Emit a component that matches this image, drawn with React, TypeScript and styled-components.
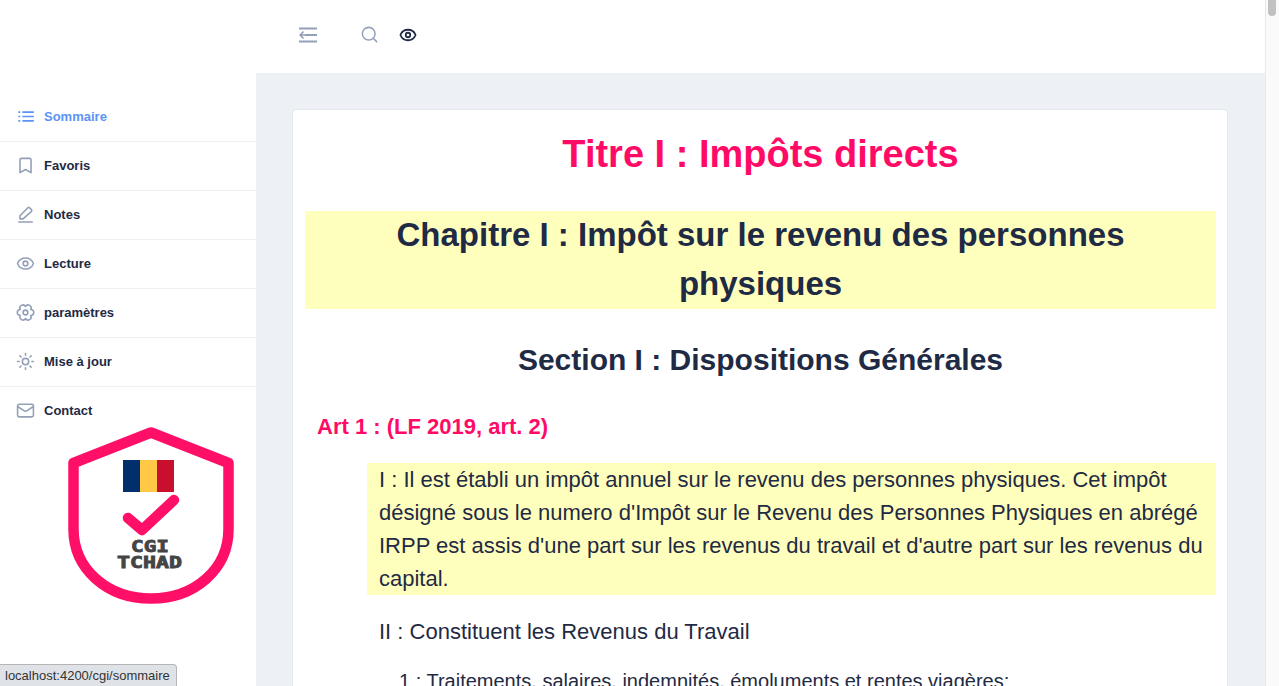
import React from 'react';
import styled, { createGlobalStyle } from 'styled-components';
import { Bookmark, Eye, Mail, Search, Sun } from 'lucide-react';

const GlobalStyle = createGlobalStyle`
  html, body {
    margin: 0;
    height: 100%;
    overflow: hidden;
    background: #fff;
    font-family: "Liberation Sans", Arial, sans-serif;
    color: #1f2a44;
  }
`;

type IconProps = { size?: number; strokeWidth?: number; color?: string };

const ListIcon = ({ size, strokeWidth, color }: IconProps) => (
  <svg width={size} height={size} viewBox="0 0 24 24" fill="none" stroke={color} strokeWidth={strokeWidth}>
    <path d="M8 6.5h14.5M8 12h14.5M8 17.5h14.5" />
    <path d="M3 6.5h2.4M3 12h2.4M3 17.5h2.4" />
  </svg>
);

const NoteIcon = ({ size, strokeWidth, color }: IconProps) => (
  <svg width={size} height={size} viewBox="0 0 24 24" fill="none" stroke={color} strokeWidth={strokeWidth} strokeLinejoin="round" strokeLinecap="round">
    <path d="M3.5 21.5h17" />
    <path d="M5 17.5v-4L15 3.5a1.5 1.5 0 0 1 2.1 0l2.4 2.4a1.5 1.5 0 0 1 0 2.1L9 17.5Z" />
  </svg>
);

const GearIcon = ({ size, strokeWidth, color }: IconProps) => (
  <svg width={size} height={size} viewBox="0 0 24 24" fill="none" stroke={color} strokeWidth={strokeWidth} strokeLinejoin="round">
    <path d="M12 4.4A3.8 3.8 0 0 1 18.6 8.2A3.8 3.8 0 0 1 18.6 15.8A3.8 3.8 0 0 1 12 19.6A3.8 3.8 0 0 1 5.4 15.8A3.8 3.8 0 0 1 5.4 8.2A3.8 3.8 0 0 1 12 4.4Z" />
    <circle cx="12" cy="12" r="3" />
  </svg>
);

const menu = [
  { label: 'Sommaire', icon: ListIcon, active: true },
  { label: 'Favoris', icon: Bookmark },
  { label: 'Notes', icon: NoteIcon },
  { label: 'Lecture', icon: Eye },
  { label: 'paramètres', icon: GearIcon },
  { label: 'Mise à jour', icon: Sun },
  { label: 'Contact', icon: Mail },
];

const BackIcon = () => (
  <svg width="18" height="16" viewBox="0 0 18 16" fill="none" stroke="#94a0b8" strokeWidth="2">
    <path d="M0 1.5h18M6 8h12M0 14.5h18" />
    <path d="M4.5 4.5 1.2 8l3.3 3.5M1.5 8H7" strokeWidth="1.7" />
  </svg>
);

const ShieldLogo = () => (
  <svg width="168" height="184" viewBox="0 0 168 184">
    <path
      d="M84 8.5 L161.5 39 V105 C161.5 145 128 174.5 84 174.5 C40 174.5 6.5 145 6.5 105 V39 Z"
      fill="#fff"
      stroke="#ff0f68"
      strokeWidth="10.5"
      strokeLinejoin="round"
    />
    <rect x="56" y="36" width="17" height="32" fill="#002f6c" />
    <rect x="73" y="36" width="17" height="32" fill="#ffc845" />
    <rect x="90" y="36" width="17" height="32" fill="#c8102e" />
    <path
      d="M61 94 L75 106 L107 76"
      fill="none"
      stroke="#ff0f68"
      strokeWidth="10.5"
      strokeLinecap="round"
      strokeLinejoin="round"
    />
    <LogoText x="64" y="128" textLength="38" lengthAdjust="spacingAndGlyphs">CGI</LogoText>
    <LogoText x="50" y="144" textLength="65" lengthAdjust="spacingAndGlyphs">TCHAD</LogoText>
  </svg>
);

export default function App() {
  return (
    <Page>
      <GlobalStyle />
      <Content>
        <Sidebar>
          <Brand />
          <Menu>
            {menu.map(({ label, icon: Icon, active }) => (
              <MenuItem key={label} $active={active}>
                <Icon size={19} strokeWidth={2} color={active ? '#5b93f7' : '#94a0b8'} />
                <span>{label}</span>
              </MenuItem>
            ))}
          </Menu>
          <LogoWrap>
            <ShieldLogo />
          </LogoWrap>
        </Sidebar>
        <Main>
          <Header>
            <BackIcon />
            <SearchWrap>
              <Search size={19} strokeWidth={1.9} color="#94a0b8" />
            </SearchWrap>
            <Eye size={18} strokeWidth={2.4} color="#1f2a44" />
          </Header>
          <Body>
            <Card>
              <Title>Titre I : Impôts directs</Title>
              <Chapter>Chapitre I : Impôt sur le revenu des personnes physiques</Chapter>
              <Section>Section I : Dispositions Générales</Section>
              <Article>Art 1 : (LF 2019, art. 2)</Article>
              <Highlight>
                I : Il est établi un impôt annuel sur le revenu des personnes physiques. Cet impôt
                désigné sous le numero d'Impôt sur le Revenu des Personnes Physiques en abrégé IRPP
                est assis d'une part sur les revenus du travail et d'autre part sur les revenus du
                capital.
              </Highlight>
              <Para>II : Constituent les Revenus du Travail</Para>
              <SubPara>1 : Traitements, salaires, indemnités, émoluments et rentes viagères;</SubPara>
            </Card>
          </Body>
        </Main>
      </Content>
      <Scrollbar>
        <Thumb />
      </Scrollbar>
      <StatusTip>localhost:4200/cgi/sommaire</StatusTip>
    </Page>
  );
}

const LogoText = styled.text`
  font-family: "DejaVu Sans Mono", monospace;
  font-weight: 700;
  font-size: 16px;
  fill: #444;
  stroke: #444;
  stroke-width: 0.8px;
`;

const Page = styled.div`
  display: flex;
  width: 1279px;
  height: 686px;
  overflow: hidden;
`;

const Content = styled.div`
  flex: 1;
  display: flex;
  min-width: 0;
`;

const Sidebar = styled.aside`
  width: 256px;
  flex: none;
  background: #fff;
`;

const Brand = styled.div`
  height: 93px;
`;

const Menu = styled.nav`
  display: flex;
  flex-direction: column;
`;

const MenuItem = styled.a<{ $active?: boolean }>`
  height: 48px;
  box-sizing: content-box;
  display: flex;
  align-items: center;
  gap: 9px;
  padding: 0 0 0 16px;
  border-bottom: 1px solid #edf0f5;
  font-size: 13px;
  font-weight: 700;
  color: ${({ $active }) => ($active ? '#5b93f7' : '#1f2a44')};

  & > span,
  & > svg {
    margin-top: -1px;
  }

  &:last-child {
    border-bottom: none;
  }
`;

const LogoWrap = styled.div`
  display: flex;
  margin: -11px 0 0 67px;
`;

const Main = styled.div`
  flex: 1;
  min-width: 0;
  display: flex;
  flex-direction: column;
`;

const Header = styled.header`
  height: 73px;
  flex: none;
  display: flex;
  align-items: center;
  padding: 0 0 4px 43px;
  box-sizing: border-box;
  background: #fff;
`;

const SearchWrap = styled.div`
  display: flex;
  margin: 0 20px 0 43px;
`;

const Body = styled.main`
  flex: 1;
  min-height: 0;
  overflow: hidden;
  background: #edf0f5;
  padding: 36px 37px 0 36px;
`;

const Card = styled.article`
  background: #fff;
  border: 1px solid #e2e7f0;
  border-radius: 4px 4px 0 0;
  padding: 0 11px 40px 12px;
  min-height: 700px;
`;

const Title = styled.h1`
  margin: 0;
  padding-top: 20px;
  font-size: 38px;
  line-height: 49px;
  font-weight: 700;
  text-align: center;
  color: #ff0a66;
`;

const Chapter = styled.h2`
  margin: 32px 0 0;
  padding: 0 60px 1px;
  font-size: 33px;
  line-height: 48.5px;
  font-weight: 700;
  text-align: center;
  background: #ffffbd;
`;

const Section = styled.h3`
  margin: 26px 0 0;
  font-size: 30px;
  line-height: 50px;
  font-weight: 700;
  text-align: center;
`;

const Article = styled.h4`
  margin: 26px 0 0 12px;
  font-size: 22px;
  line-height: 32px;
  font-weight: 700;
  color: #ff0a66;
`;

const Highlight = styled.p`
  margin: 20px 0 0 62px;
  padding: 0 12px;
  font-size: 22px;
  line-height: 33px;
  background: #ffffbd;
`;

const Para = styled.p`
  margin: 20px 0 0 74px;
  font-size: 22px;
  line-height: 33px;
`;

const SubPara = styled.p`
  margin: 17px 0 0 94px;
  font-size: 20px;
  line-height: 33px;
`;

const Scrollbar = styled.div`
  width: 14px;
  flex: none;
  background: #fafafa;
  border-left: 1px solid #e8e8e8;
  box-sizing: border-box;
  padding: 0 3px 0 2px;
`;

const Thumb = styled.div`
  height: 16px;
  background: #c1c1c1;
  border-radius: 0 0 4px 4px;
`;

const StatusTip = styled.div`
  position: fixed;
  left: 0;
  bottom: 0;
  height: 21px;
  line-height: 21px;
  padding: 0 6px 0 5px;
  font-size: 13px;
  color: #333;
  background: #dfe3e8;
  border: 1px solid #b5b5b5;
  border-left: none;
  border-bottom: none;
  border-radius: 0 4px 0 0;
`;
